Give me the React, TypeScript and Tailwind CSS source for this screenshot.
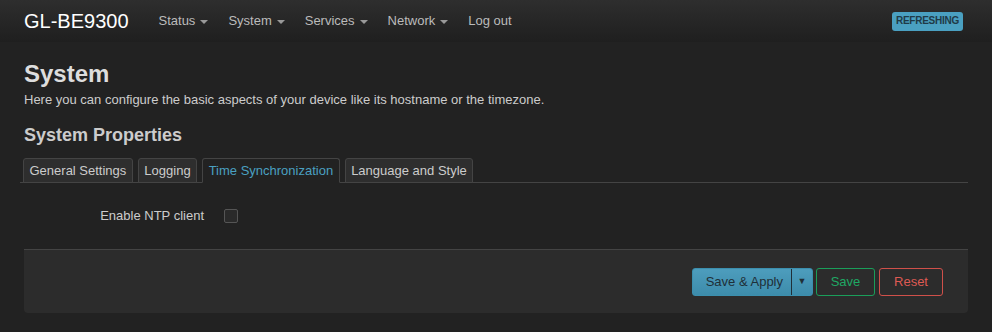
import React, { useState } from "react";

export default function App() {
  const [tab, setTab] = useState("time");
  const [ntp, setNtp] = useState(false);

  const tabs = [
    { id: "general", label: "General Settings" },
    { id: "logging", label: "Logging" },
    { id: "time", label: "Time Synchronization" },
    { id: "lang", label: "Language and Style" },
  ];

  const Caret = () => (
    <span className="ml-[5px] inline-block h-0 w-0 border-x-[4px] border-t-[4px] border-x-transparent border-t-[#999] align-middle" />
  );

  return (
    <div className="min-h-screen bg-[#222] font-['Liberation_Sans',Arial,sans-serif] text-[#ccc]">
      {/* header */}
      <header className="flex h-[42px] items-center bg-gradient-to-b from-[#2e2e2e] to-[#1f1f1f] px-6">
        <span className="mr-[30px] text-[20px] leading-none text-white">GL-BE9300</span>
        <nav className="flex items-center gap-[20px] text-[13px] text-[#bbb]">
          <span>Status<Caret /></span>
          <span>System<Caret /></span>
          <span>Services<Caret /></span>
          <span>Network<Caret /></span>
          <span>Log out</span>
        </nav>
        <span className="ml-auto mr-[5px] rounded-[3px] bg-[#4aa0c1] px-[4px] py-[4.5px] text-[10px] font-bold leading-none tracking-tight text-[#1f3a47]">
          REFRESHING
        </span>
      </header>

      <main className="px-6 pt-[18px]">
        <h2 className="text-[24px] font-bold leading-[28px] text-[#ddd]">System</h2>
        <p className="mt-[3px] text-[13px] leading-[17px] text-[#ccc]">
          Here you can configure the basic aspects of your device like its hostname or the timezone.
        </p>
        <h3 className="mt-[16px] text-[18px] font-bold leading-[23px] text-[#ccc]">System Properties</h3>

        <div className="-ml-[4px] mt-[11px] flex items-end gap-[5px] border-b border-[#444] pl-[3px]">
          {tabs.map((t) => (
            <button
              key={t.id}
              onClick={() => setTab(t.id)}
              className={`-mb-px h-[25px] rounded-t-[3px] border px-[5.5px] text-[13px] leading-[23px] ${
                tab === t.id
                  ? "border-[#444] border-b-[#222] bg-[#222] text-[#4aa0c1]"
                  : "border-[#444] bg-[#2e2e2e] text-[#ccc]"
              }`}
            >
              {t.label}
            </button>
          ))}
        </div>

        <div className="flex h-[66px] items-center">
          <label className="w-[180px] text-right text-[13px] text-[#ccc]">Enable NTP client</label>
          <button
            onClick={() => setNtp(!ntp)}
            className={`ml-[20px] h-[14px] w-[14px] rounded-[2px] border border-[#555] ${ntp ? "bg-[#4aa0c1]" : "bg-[#2a2a2a]"}`}
          />
        </div>

        <div className="flex h-[64px] items-center justify-end rounded-b-[4px] border-t border-[#444] bg-[#2c2c2c] pr-[25px]">
          <div className="flex h-[28px] items-stretch rounded-[3px] border border-[#3b8fae] bg-gradient-to-b from-[#4d9dbd] to-[#3d8cab] text-[13px] text-[#1f2f38]">
            <span className="flex items-center border-r border-[#1f2f38] pl-[13px] pr-[8px]">Save &amp; Apply</span>
            <span className="flex w-[20px] items-center justify-center text-[9px]">▼</span>
          </div>
          <button className="ml-[3px] h-[28px] w-[59px] rounded-[3px] border border-[#1a9e5a] text-[13px] text-[#1fa864]">
            Save
          </button>
          <button className="ml-[4px] h-[28px] w-[64px] rounded-[3px] border border-[#d0504a] text-[13px] text-[#de5a53]">
            Reset
          </button>
        </div>
      </main>
    </div>
  );
}
